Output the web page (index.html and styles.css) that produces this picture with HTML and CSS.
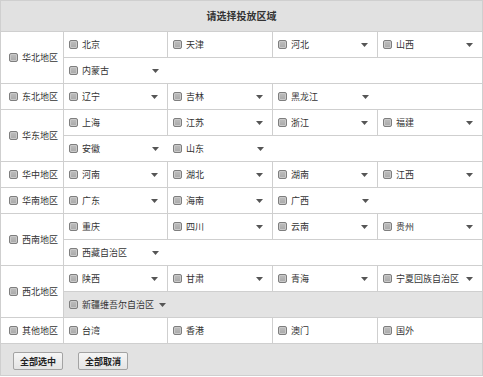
FILE: index.html
```html
<!DOCTYPE html>
<html lang="zh">
<head>
<meta charset="utf-8">
<link rel="stylesheet" href="styles.css">
</head>
<body>
<div class="panel">
  <div class="head">请选择投放区域</div>

  <div class="region">
    <div class="rlabel"><span class="cb"></span>华北地区</div>
    <div class="rbody">
      <div class="line">
        <div class="item"><span class="cb"></span><span class="name">北京</span></div>
        <div class="item"><span class="cb"></span><span class="name">天津</span></div>
        <div class="item"><span class="cb"></span><span class="name">河北</span><svg class="arr" width="7" height="4" viewBox="0 0 7 4"><polygon points="0,0 7,0 3.5,4"/></svg></div>
        <div class="item"><span class="cb"></span><span class="name">山西</span><svg class="arr" width="7" height="4" viewBox="0 0 7 4"><polygon points="0,0 7,0 3.5,4"/></svg></div>
      </div>
      <div class="line open">
        <div class="item"><span class="cb"></span><span class="name">内蒙古</span><svg class="arr" width="7" height="4" viewBox="0 0 7 4"><polygon points="0,0 7,0 3.5,4"/></svg></div>
      </div>
    </div>
  </div>

  <div class="region">
    <div class="rlabel"><span class="cb"></span>东北地区</div>
    <div class="rbody">
      <div class="line">
        <div class="item"><span class="cb"></span><span class="name">辽宁</span><svg class="arr" width="7" height="4" viewBox="0 0 7 4"><polygon points="0,0 7,0 3.5,4"/></svg></div>
        <div class="item"><span class="cb"></span><span class="name">吉林</span><svg class="arr" width="7" height="4" viewBox="0 0 7 4"><polygon points="0,0 7,0 3.5,4"/></svg></div>
        <div class="item nb"><span class="cb"></span><span class="name">黑龙江</span><svg class="arr" width="7" height="4" viewBox="0 0 7 4"><polygon points="0,0 7,0 3.5,4"/></svg></div>
      </div>
    </div>
  </div>

  <div class="region">
    <div class="rlabel"><span class="cb"></span>华东地区</div>
    <div class="rbody">
      <div class="line">
        <div class="item"><span class="cb"></span><span class="name">上海</span></div>
        <div class="item"><span class="cb"></span><span class="name">江苏</span><svg class="arr" width="7" height="4" viewBox="0 0 7 4"><polygon points="0,0 7,0 3.5,4"/></svg></div>
        <div class="item"><span class="cb"></span><span class="name">浙江</span><svg class="arr" width="7" height="4" viewBox="0 0 7 4"><polygon points="0,0 7,0 3.5,4"/></svg></div>
        <div class="item"><span class="cb"></span><span class="name">福建</span><svg class="arr" width="7" height="4" viewBox="0 0 7 4"><polygon points="0,0 7,0 3.5,4"/></svg></div>
      </div>
      <div class="line open">
        <div class="item"><span class="cb"></span><span class="name">安徽</span><svg class="arr" width="7" height="4" viewBox="0 0 7 4"><polygon points="0,0 7,0 3.5,4"/></svg></div>
        <div class="item"><span class="cb"></span><span class="name">山东</span><svg class="arr" width="7" height="4" viewBox="0 0 7 4"><polygon points="0,0 7,0 3.5,4"/></svg></div>
      </div>
    </div>
  </div>

  <div class="region">
    <div class="rlabel"><span class="cb"></span>华中地区</div>
    <div class="rbody">
      <div class="line">
        <div class="item"><span class="cb"></span><span class="name">河南</span><svg class="arr" width="7" height="4" viewBox="0 0 7 4"><polygon points="0,0 7,0 3.5,4"/></svg></div>
        <div class="item"><span class="cb"></span><span class="name">湖北</span><svg class="arr" width="7" height="4" viewBox="0 0 7 4"><polygon points="0,0 7,0 3.5,4"/></svg></div>
        <div class="item"><span class="cb"></span><span class="name">湖南</span><svg class="arr" width="7" height="4" viewBox="0 0 7 4"><polygon points="0,0 7,0 3.5,4"/></svg></div>
        <div class="item"><span class="cb"></span><span class="name">江西</span><svg class="arr" width="7" height="4" viewBox="0 0 7 4"><polygon points="0,0 7,0 3.5,4"/></svg></div>
      </div>
    </div>
  </div>

  <div class="region">
    <div class="rlabel"><span class="cb"></span>华南地区</div>
    <div class="rbody">
      <div class="line">
        <div class="item"><span class="cb"></span><span class="name">广东</span><svg class="arr" width="7" height="4" viewBox="0 0 7 4"><polygon points="0,0 7,0 3.5,4"/></svg></div>
        <div class="item"><span class="cb"></span><span class="name">海南</span><svg class="arr" width="7" height="4" viewBox="0 0 7 4"><polygon points="0,0 7,0 3.5,4"/></svg></div>
        <div class="item nb"><span class="cb"></span><span class="name">广西</span><svg class="arr" width="7" height="4" viewBox="0 0 7 4"><polygon points="0,0 7,0 3.5,4"/></svg></div>
      </div>
    </div>
  </div>

  <div class="region">
    <div class="rlabel"><span class="cb"></span>西南地区</div>
    <div class="rbody">
      <div class="line">
        <div class="item"><span class="cb"></span><span class="name">重庆</span></div>
        <div class="item"><span class="cb"></span><span class="name">四川</span><svg class="arr" width="7" height="4" viewBox="0 0 7 4"><polygon points="0,0 7,0 3.5,4"/></svg></div>
        <div class="item"><span class="cb"></span><span class="name">云南</span><svg class="arr" width="7" height="4" viewBox="0 0 7 4"><polygon points="0,0 7,0 3.5,4"/></svg></div>
        <div class="item"><span class="cb"></span><span class="name">贵州</span><svg class="arr" width="7" height="4" viewBox="0 0 7 4"><polygon points="0,0 7,0 3.5,4"/></svg></div>
      </div>
      <div class="line open">
        <div class="item"><span class="cb"></span><span class="name">西藏自治区</span><svg class="arr" width="7" height="4" viewBox="0 0 7 4"><polygon points="0,0 7,0 3.5,4"/></svg></div>
      </div>
    </div>
  </div>

  <div class="region">
    <div class="rlabel"><span class="cb"></span>西北地区</div>
    <div class="rbody">
      <div class="line">
        <div class="item"><span class="cb"></span><span class="name">陕西</span><svg class="arr" width="7" height="4" viewBox="0 0 7 4"><polygon points="0,0 7,0 3.5,4"/></svg></div>
        <div class="item"><span class="cb"></span><span class="name">甘肃</span><svg class="arr" width="7" height="4" viewBox="0 0 7 4"><polygon points="0,0 7,0 3.5,4"/></svg></div>
        <div class="item"><span class="cb"></span><span class="name">青海</span><svg class="arr" width="7" height="4" viewBox="0 0 7 4"><polygon points="0,0 7,0 3.5,4"/></svg></div>
        <div class="item"><span class="cb"></span><span class="name">宁夏回族自治区</span><svg class="arr" width="7" height="4" viewBox="0 0 7 4"><polygon points="0,0 7,0 3.5,4"/></svg></div>
      </div>
      <div class="line gray">
        <div class="item"><span class="cb"></span><span class="name">新疆维吾尔自治区</span><svg class="arr" width="7" height="4" viewBox="0 0 7 4"><polygon points="0,0 7,0 3.5,4"/></svg></div>
      </div>
    </div>
  </div>

  <div class="region">
    <div class="rlabel"><span class="cb"></span>其他地区</div>
    <div class="rbody">
      <div class="line">
        <div class="item"><span class="cb"></span><span class="name">台湾</span></div>
        <div class="item"><span class="cb"></span><span class="name">香港</span></div>
        <div class="item"><span class="cb"></span><span class="name">澳门</span></div>
        <div class="item"><span class="cb"></span><span class="name">国外</span></div>
      </div>
    </div>
  </div>

  <div class="foot">
    <button class="btn" type="button">全部选中</button>
    <button class="btn" type="button">全部取消</button>
  </div>
</div>
</body>
</html>
```

FILE: styles.css
```css
html, body {
  margin: 0;
  padding: 0;
  background: #ffffff;
}

body {
  font-family: "Noto Sans CJK SC", "Noto Sans", sans-serif;
  font-size: 9px;
  color: #333333;
}

.panel {
  width: 483px;
  box-sizing: border-box;
  border: 1px solid #cfcfcf;
  border-bottom: none;
}

.head {
  height: 30px;
  line-height: 30px;
  border-bottom: 1px solid #cfcfcf;
  background: #e1e1e1;
  text-align: center;
  font-weight: bold;
  font-size: 10px;
  color: #333333;
}

.region {
  display: flex;
  border-bottom: 1px solid #cfcfcf;
}

.rlabel {
  width: 63px;
  box-sizing: border-box;
  flex: none;
  border-right: 1px solid #cfcfcf;
  display: flex;
  align-items: center;
  gap: 4px;
  padding-left: 8px;
  white-space: nowrap;
}

.rbody {
  flex: 1;
  min-width: 0;
}

.line {
  display: grid;
  grid-template-columns: 104px 105px 105px 1fr;
  height: 25px;
}

.line + .line {
  border-top: 1px solid #cfcfcf;
}

.item {
  display: flex;
  align-items: center;
  gap: 4px;
  box-sizing: border-box;
  padding: 0 9px 0 5px;
  border-right: 1px solid #cfcfcf;
  white-space: nowrap;
  min-width: 0;
}

.item:last-child,
.item.nb,
.line.open .item {
  border-right: none;
}

.name {
  flex: 1;
}

.line.gray {
  display: flex;
  background: #e3e3e3;
}

.line.gray .item .name {
  flex: none;
}

.line.gray .arr {
  margin-left: 1px;
}

.cb {
  display: inline-block;
  flex: none;
  width: 9px;
  height: 9px;
  box-sizing: border-box;
  border: 1px solid #7e7e7e;
  border-radius: 2px;
  background: linear-gradient(#bdbdbd, #a9a9a9);
  box-shadow: inset 0 0 0 1px #c9c9c9;
}

.arr {
  flex: none;
  display: block;
  fill: #555555;
}

.foot {
  height: 32px;
  box-sizing: border-box;
  border-bottom: 1px solid #cfcfcf;
  background: #e2e2e2;
  display: flex;
  align-items: flex-start;
  gap: 15px;
  padding: 8px 0 0 12px;
}

.btn {
  width: 50px;
  height: 18px;
  margin: 0;
  padding: 0;
  border: 1px solid #a3a3a3;
  border-radius: 2px;
  background: linear-gradient(#f6f6f6, #e4e4e4);
  font-family: "Noto Sans CJK SC", "Noto Sans", sans-serif;
  font-size: 9px;
  font-weight: bold;
  color: #222222;
}
```
